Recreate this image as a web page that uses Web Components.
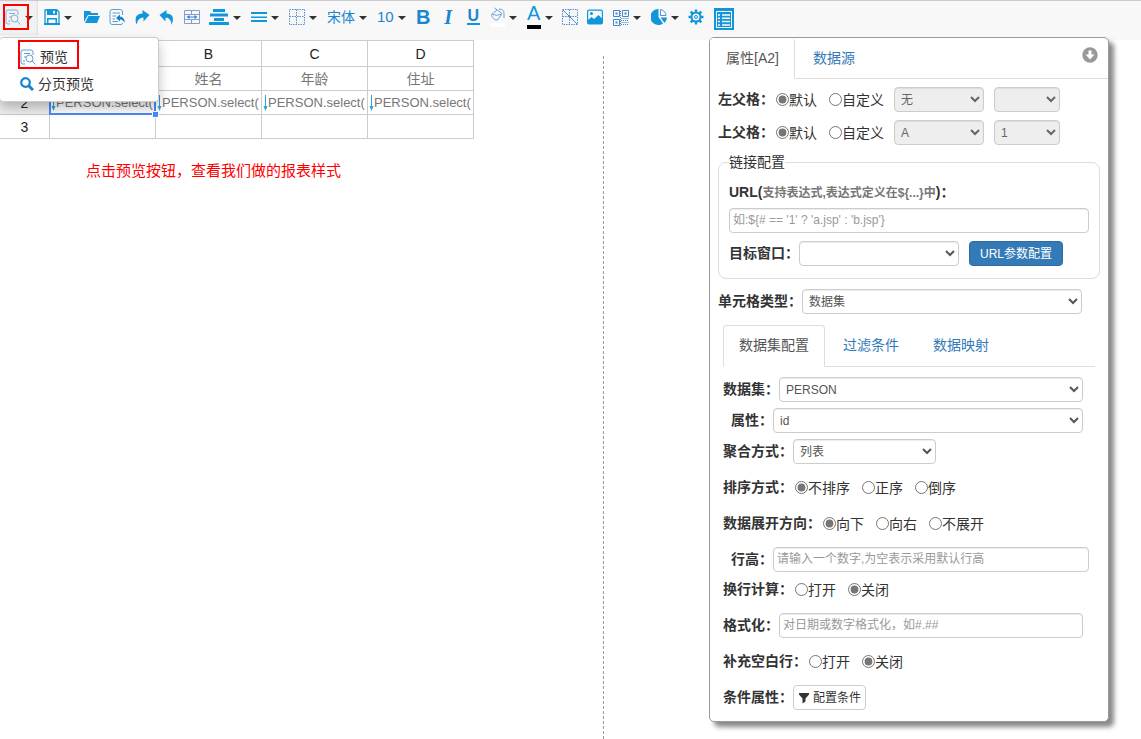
<!DOCTYPE html>
<html lang="zh-CN">
<head>
<meta charset="utf-8">
<title>报表设计器</title>
<style>
  body { margin: 0; background: #fff; color: #333; font: 14px/20px "Liberation Sans", "Noto Sans CJK SC", sans-serif; }
</style>
</head>
<body>
<report-designer></report-designer>

<template id="t-designer">
  <style>
    :host { display: flex; flex-direction: column; min-height: 100vh; position: relative; overflow: hidden; }
    main { display: flex; flex: 1; }
    sheet-grid { flex: none; width: 603px; }
    .guide { margin-top: 16px; border-left: 1px dashed #999; }
    preview-menu { position: absolute; left: 0; top: 37px; z-index: 2; }
    property-panel { position: absolute; right: 32px; top: 37px; z-index: 1; }
  </style>
  <tool-bar></tool-bar>
  <main>
    <sheet-grid></sheet-grid>
    <div class="guide"></div>
  </main>
  <preview-menu></preview-menu>
  <property-panel></property-panel>
</template>

<template id="t-toolbar">
  <style>
    :host { display: flex; align-items: flex-start; height: 39px; background: #f8f8f8; border-top: 1px solid #ccc; }
    .first { margin-right: 1px; }
    .save { margin-right: 2px; }
    .last { margin-left: 3px; }
    .txt { font-size: 15px; }
    .cjk { font-size: 14px; }
    .b, .i, .u, .a { font-size: 20px; width: 15px; text-align: center; }
    .b, .i { font-weight: bold; }
    .i { font-family: "Liberation Serif", serif; font-style: italic; }
    .u { font-size: 16px; line-height: 14px; border-bottom: 2px solid #1296db; width: 13px; font-weight: bold; }
    .a { width: 14px; line-height: 14px; padding-bottom: 5px; border-bottom: 4px solid #000; color: #1296db; }
  </style>
  <tool-button class="first" label="预览" menu active marked><svg width="16" height="16" viewBox="0 0 16 16" fill="none" stroke="#7fb0dc"><path d="M5 15H3Q1 15 1 13V3Q1 1 3 1H11Q13 1 13 3V6M4 4.500H10M4 8H6M3 12H5"/><circle cx="9.500" cy="9.500" r="3.500"/><path d="M12 12L15.500 15.500"/></svg></tool-button>
  <tool-button class="save" label="保存" menu><svg width="16" height="16" viewBox="0 0 16 16"><path fill="none" stroke="#1296db" stroke-width="1.300" d="M1 1H13L15 3V15H1Z"/><path fill="#1296db" fill-rule="evenodd" d="M3 0H13V6H3ZM9 1.500V4.500H11V1.500ZM3 9H13V15H3ZM4.500 10.500V14H11.500V10.500Z"/><path fill="#1296db" d="M0 14H16V16H0Z"/></svg></tool-button>
  <tool-button label="打开"><svg width="16" height="16" viewBox="0 0 16 16" fill="#1296db"><path d="M0 2H6L7.500 4H14V6H4L0 13Z"/><path d="M4.500 7H16L13 14H1Z"/></svg></tool-button>
  <tool-button label="导入"><svg width="16" height="16" viewBox="0 0 16 16" fill="none" stroke="#5f9fd6"><path d="M13.500 6V3Q13.500.5 11.500.5H3Q1 .5 1 3V13Q1 15.500 3 15.500H12Q13.500 15.500 13.500 14M3.500 4H11M3.500 7H7M3.500 10H6M3.500 12.500H9"/><path fill="#1583cc" stroke="none" d="M7 9L11 5.500V7.500Q15.500 8 16 14Q14 10.500 11 10.500V12.500Z"/></svg></tool-button>
  <tool-button label="重做"><svg width="16" height="16" viewBox="0 0 16 16" fill="#1296db"><path d="M8.500 1L15.500 6L9.500 12.500L9.500 8.500Q4 8.500 2.500 15.500Q-1 5 8.500 4.500Z"/></svg></tool-button>
  <tool-button label="撤销"><svg width="16" height="16" viewBox="0 0 16 16" fill="#1296db"><path d="M7.500 1L.5 6L6.500 12.500L6.500 8.500Q12 8.500 12.500 16Q17 5 7.500 4.500Z"/></svg></tool-button>
  <tool-button label="合并单元格"><svg width="16" height="16" viewBox="0 0 16 16" fill="none" stroke="#7f9fd3"><path d="M.5 1.500H15.500V14.500H.5ZM.5 5.500H15.500M.5 10.500H15.500M7.500 1V5.500M7.500 10.500V15"/><path stroke="#2f86cc" d="M4 8H12"/><path fill="#2f86cc" stroke="none" d="M5.500 6L2.500 8L5.500 10ZM10.500 6L13.500 8L10.500 10Z"/></svg></tool-button>
  <tool-button label="水平对齐" menu><svg width="20" height="16" viewBox="0 0 20 16" fill="#1296db"><path d="M4 0H16V3H4ZM1 4.500H19V7.500H1ZM5 9H15V12H5ZM0 13H20V16H0Z"/></svg></tool-button>
  <tool-button label="垂直对齐" menu><svg width="16" height="16" viewBox="0 0 16 16" fill="#1296db"><path d="M0 3H16V5H0ZM0 7.500H16V9H0ZM0 11H16V13H0Z"/></svg></tool-button>
  <tool-button label="边框" menu><svg width="16" height="16" viewBox="0 0 16 16" fill="none" stroke="#558fcf" stroke-dasharray="1.500 1"><path d="M.5.5H15.500V15.500H.5ZM.5 7.500H15.500M7.500.5V15.500"/></svg></tool-button>
  <tool-button label="字体" menu><span class="cjk">宋体</span></tool-button>
  <tool-button label="字号" menu><span class="txt">10</span></tool-button>
  <tool-button label="加粗"><span class="b">B</span></tool-button>
  <tool-button label="斜体"><span class="i">I</span></tool-button>
  <tool-button label="下划线"><span class="u">U</span></tool-button>
  <tool-button label="背景色" menu><svg width="14" height="20" viewBox="0 0 14 20" fill="none" stroke="#6aa3d8"><path d="M3.500 1L11 6.500L7 12.500Q5 13.500 3.500 12.500L1 9.500Q0 8 1 7L6 3M1.500 7.500Q6 9 10 7.500M8 2Q13 2 13 6.500V11"/><path fill="#fff" stroke="none" d="M0 16H14V20H0Z"/></svg></tool-button>
  <tool-button label="字体颜色" menu><span class="a">A</span></tool-button>
  <tool-button label="斜表头"><svg width="16" height="16" viewBox="0 0 16 16" fill="none" stroke="#4f91cf"><path stroke-dasharray="1.500 1" d="M.5.5H15.500V15.500H.5ZM.5 7.500H15.500M7.500.5V15.500"/><path d="M1 1L15 15"/></svg></tool-button>
  <tool-button label="图片"><svg width="16" height="16" viewBox="0 0 16 16"><rect x=".6" y="1.100" width="14.800" height="13.800" rx="1.500" fill="none" stroke="#1296db" stroke-width="1.200"/><circle cx="4.500" cy="4.500" r="1.500" fill="#1296db"/><path fill="#1296db" d="M1 11L4.500 8L7 10L11.500 6L15 9.500V15H1Z"/></svg></tool-button>
  <tool-button label="条码" menu><svg width="16" height="18" viewBox="0 0 16 18" fill="none" stroke="#4287c8"><path d="M.5 2.500H6.500V8.500H.5ZM9.500 2.500H15.500V8.500H9.500ZM.5 11.500H6.500V17.500H.5Z"/><path fill="#4287c8" stroke="none" d="M2.500 4.500H4.500V6.500H2.500ZM11.500 4.500H13.500V6.500H11.500ZM2.500 13.500H4.500V15.500H2.500Z"/><path stroke-dasharray="1 1" d="M8.500 10.500H16M8 12.500H16M8.500 14.500H16M8 16.500H16M7.500 3V18"/></svg></tool-button>
  <tool-button label="图表" menu><svg width="16" height="16" viewBox="0 0 16 16"><path fill="#1296db" d="M7.500 0V8L12 14.500A8 8 0 1 1 7.500 0Z"/><path fill="none" stroke="#4f97d2" d="M9.500.5V6.500H15Q14.500 1.500 9.500.5Z"/><path fill="#1296db" d="M9.500 8.500H16Q16 11.500 13.500 14Z"/></svg></tool-button>
  <tool-button label="设置"><svg width="16" height="16" viewBox="0 0 16 16" fill="none" stroke="#1296db"><path stroke-width="2.500" d="M8 .5V4M8 12V15.500M.5 8H4M12 8H15.500M2.700 2.700L5 5M11 11L13.300 13.300M2.700 13.300L5 11M11 5L13.300 2.700"/><circle cx="8" cy="8" r="4.500" stroke-width="2" fill="#f8f8f8"/><circle cx="8" cy="8" r="1.500"/></svg></tool-button>
  <tool-button class="last" label="属性面板" tall><svg width="20" height="22" viewBox="0 0 20 22"><path fill="#1296db" d="M0 0H20V22H0Z"/><path fill="none" stroke="#fff" d="M2.500 3.500H17.500V19.500H2.500Z"/><path stroke="#fff" stroke-width="1.500" d="M4 7H6M8 7H16M4 10.300H6M8 10.300H16M4 13.600H6M8 13.600H16M4 17H6M8 17H16"/></svg></tool-button>
</template>

<template id="t-toolbutton">
  <style>
    :host { display: block; }
    button { position: relative; display: flex; align-items: center; justify-content: center; gap: 4px; min-width: 25px; height: 32px; margin: 0; padding: 0; border: 0; background: none; color: #1a86cf; font: inherit; }
    :host([menu]) button { padding: 0 5px; }
    :host([active]) button { height: 34px; padding-bottom: 2px; background: #f2f2f2; box-shadow: inset -1px 0 2px #ddd; }
    :host([tall]) button { height: 36px; }
    .caret { display: none; border: 4px solid transparent; border-top-color: #333; border-bottom: 0; margin-top: 2px; }
    :host([menu]) .caret { display: block; }
    .mark { display: none; position: absolute; left: 3px; top: 3px; width: 22px; height: 22px; border: 2px solid #f00; }
    :host([marked]) .mark { display: block; }
    ::slotted(*) { display: block; }
  </style>
  <button type="button"><slot></slot><span class="caret"></span><span class="mark"></span></button>
</template>

<template id="t-menu">
  <style>
    :host { display: block; width: 159px; background: #fff; border: 1px solid #ccc; border-left: 0; border-radius: 4px; box-shadow: 0 6px 12px rgba(0,0,0,.25); box-sizing: border-box; padding: 5px 0 4px; }
    ul { list-style: none; margin: 0; padding: 0; }
    li { position: relative; height: 27px; padding-left: 20px; }
    a { display: flex; align-items: center; gap: 4px; height: 27px; color: #333; text-decoration: none; }
    .mark { position: absolute; left: 18px; top: -3px; width: 57px; height: 25px; border: 2px solid #f00; }
  </style>
  <ul>
    <li><a href="#preview"><svg width="16" height="16" viewBox="0 0 16 16" fill="none" stroke="#5d9fd3"><path d="M5 15H3Q1 15 1 13V3Q1 1 3 1H11Q13 1 13 3V6M4 4.500H10M4 8H6M3 12H5"/><circle cx="9.500" cy="9.500" r="3.500"/><path d="M12 12L15.500 15.500"/></svg>预览</a><span class="mark"></span></li>
    <li><a href="#paged"><svg width="14" height="14" viewBox="0 0 14 14" fill="none" stroke="#1583cc"><circle cx="5.500" cy="5.500" r="4.300" stroke-width="2.200"/><path stroke-width="3" d="M8.500 8.500L13 13"/></svg>分页预览</a></li>
  </ul>
</template>

<template id="t-sheet">
  <style>
    :host { display: block; }
    table { border-collapse: collapse; table-layout: fixed; width: 475px; margin-left: -1px; }
    col.h { width: 50px; }
    th, td { border: 1px solid #ccc; padding: 0; height: 23px; text-align: center; line-height: 20px; }
    thead th { height: 25px; }
    th { font-weight: normal; color: #222; }
    th.on { background: #eee; }
    td { color: #777; font-size: 13px; position: relative; }
    .cap { font-size: 14px; }
    .sel { position: absolute; inset: -1px; border: 2px solid #4b89ff; }
    .knob { position: absolute; right: -4px; bottom: -4px; width: 5px; height: 5px; background: #4b89ff; border: 1px solid #fff; z-index: 1; }
    p { margin: 22px 0 0 86px; color: #f00; font-size: 15px; }
  </style>
  <table>
    <colgroup><col class="h"><col><col><col><col></colgroup>
    <thead><tr><th></th><th>A</th><th>B</th><th>C</th><th>D</th></tr></thead>
    <tbody>
      <tr><th>1</th><td></td><td class="cap">姓名</td><td class="cap">年龄</td><td class="cap">住址</td></tr>
      <tr><th class="on">2</th><td><cell-expr>PERSON.select(</cell-expr><span class="sel"></span><span class="knob"></span></td><td><cell-expr>PERSON.select(</cell-expr></td><td><cell-expr>PERSON.select(</cell-expr></td><td><cell-expr>PERSON.select(</cell-expr></td></tr>
      <tr><th>3</th><td></td><td></td><td></td><td></td></tr>
    </tbody>
  </table>
  <p>点击预览按钮，查看我们做的报表样式</p>
</template>

<template id="t-expr">
  <style>
    :host { display: flex; align-items: center; height: 23px; overflow: hidden; white-space: nowrap; }
    svg { flex: none; margin-left: 1px; }
  </style>
  <svg width="5" height="16" viewBox="0 0 5 16"><path fill="#2aa3e0" d="M2 0H3V11H4.500L2.500 16L.5 11H2Z"/></svg><slot></slot>
</template>

<template id="t-tabs">
  <style>
    :host { display: block; }
    nav { display: flex; gap: 2px; border-bottom: 1px solid #ddd; }
    a { padding: 9px 15px 11px; border: 1px solid transparent; border-radius: 4px 4px 0 0; margin-bottom: -1px; color: #337ab7; text-decoration: none; }
    a.on { color: #555; background: #fff; border-color: #ddd #ddd #fff; }
    :host([flush]) a { padding-bottom: 10px; }
    :host([flush]) a.on { border-top-color: transparent; border-left-color: transparent; }
  </style>
  <nav></nav>
</template>

<template id="t-row">
  <style>
    :host { display: flex; align-items: center; height: 25px; margin-top: 6px; }
    :host([tight]) { margin-top: 5px; }
    :host([loose]) { margin-top: 11px; }
    :host([indent]) { padding-left: 8px; }
    ::slotted(label), ::slotted(.label) { font-weight: bold; padding-bottom: 2px; }
  </style>
  <slot></slot>
</template>

<template id="t-radios">
  <style>
    :host { display: block; margin-left: 2px; }
    fieldset { display: flex; gap: 12px; border: 0; margin: 0; padding: 0; min-width: 0; }
    label { display: flex; align-items: center; }
    input { width: 13px; height: 13px; margin: 0; accent-color: #767676; }
  </style>
  <fieldset></fieldset>
</template>

<template id="t-panel">
  <style>
    :host { display: block; width: 400px; box-sizing: border-box; background: #fff; border: 1px solid #999; border-radius: 5px; box-shadow: 5px 5px 5px #888; }
    .collapse { position: absolute; right: 10px; top: 9px; padding: 0; border: 0; background: none; line-height: 0; }
    .body { padding: 8px 8px 11px; }
    select, input, .btn { box-sizing: border-box; height: 25px; border: 1px solid #ccc; border-radius: 4px; font: 12px/18px "Liberation Sans", "Noto Sans CJK SC", sans-serif; color: #555; background-color: #fff; margin: 0; }
    select, input { box-shadow: inset 0 1px 1px rgba(0,0,0,.075); padding: 2px; min-width: 0; }
    input { padding: 1px 3px 3px; }
    input::placeholder { color: #999; opacity: 1; }
    select:disabled { background-color: #eee; opacity: 1; color: #666; }
    .top { margin-top: 8px; }
    .top:first-child { margin-top: 0; }
    .w90 { width: 90px; margin-left: 10px; }
    .w66 { width: 66px; margin-left: 10px; }
    .w143 { width: 143px; }
    .w160 { width: 160px; }
    .fill { flex: 1; }
    .link { border: 1px solid #ddd; border-radius: 8px; margin: 7px 0 10px; padding: 10px 10px 12px; min-width: 0; }
    .link legend { padding: 0; height: 20px; }
    .link .url { display: block; font-weight: bold; margin-bottom: 5px; }
    .link small { font-size: 12px; color: #777; }
    .link input { display: block; width: 100%; }
    .link form-row { margin-top: 8px; }
    .btn { color: #333; padding: 0 4px; display: flex; align-items: center; gap: 3px; white-space: nowrap; }
    .primary { color: #fff; background: #337ab7; border-color: #2e6da4; padding: 0 10px; margin-left: 10px; }
    .type { margin: 0 18px 0 0; }
    .data { margin: 11px 5px 0; }
    .data form-row { margin-right: 12px; }
    .data .first { margin-top: 10px; }
    .data .wide { margin-right: 6px; }
  </style>
  <tab-strip flush tabs="属性[A2],数据源"></tab-strip>
  <button class="collapse" type="button" aria-label="收起"><svg width="16" height="16" viewBox="0 0 16 16"><circle cx="8" cy="8" r="7.700" fill="#999"/><path fill="#fff" d="M6.500 3.500H9.500V7.500H12.500L8 12.500L3.500 7.500H6.500Z"/></svg></button>
  <div class="body">
    <form-row class="top"><span class="label">左父格：</span><radio-set name="left" label="左父格" options="默认,自定义" value="默认"></radio-set><select class="w90" aria-label="左父格列" disabled><option>无</option></select><select class="w66" aria-label="左父格行" disabled><option></option></select></form-row>
    <form-row class="top"><span class="label">上父格：</span><radio-set name="top" label="上父格" options="默认,自定义" value="默认"></radio-set><select class="w90" aria-label="上父格列" disabled><option>A</option></select><select class="w66" aria-label="上父格行" disabled><option>1</option></select></form-row>
    <fieldset class="link">
      <legend>链接配置</legend>
      <label class="url" for="url">URL(<small>支持表达式,表达式定义在${...}中</small>)：</label>
      <input id="url" type="text" placeholder="如:${# == '1' ? 'a.jsp' : 'b.jsp'}">
      <form-row><label for="target">目标窗口：</label><select id="target" class="w160"><option></option></select><button class="btn primary" type="button">URL参数配置</button></form-row>
    </fieldset>
    <form-row class="type"><label for="type">单元格类型：</label><select id="type" class="fill"><option>数据集</option></select></form-row>
    <div class="data">
      <tab-strip tabs="数据集配置,过滤条件,数据映射"></tab-strip>
      <form-row class="first"><label for="ds">数据集：</label><select id="ds" class="fill"><option>PERSON</option></select></form-row>
      <form-row indent><label for="prop">属性：</label><select id="prop" class="fill"><option>id</option></select></form-row>
      <form-row><label for="agg">聚合方式：</label><select id="agg" class="w143"><option>列表</option></select></form-row>
      <form-row loose><span class="label">排序方式：</span><radio-set name="sort" label="排序方式" options="不排序,正序,倒序" value="不排序"></radio-set></form-row>
      <form-row loose><span class="label">数据展开方向：</span><radio-set name="expand" label="数据展开方向" options="向下,向右,不展开" value="向下"></radio-set></form-row>
      <form-row loose indent class="wide"><label for="height">行高：</label><input id="height" class="fill" type="text" placeholder="请输入一个数字,为空表示采用默认行高"></form-row>
      <form-row tight><span class="label">换行计算：</span><radio-set name="wrap" label="换行计算" options="打开,关闭" value="关闭"></radio-set></form-row>
      <form-row loose><label for="format">格式化：</label><input id="format" class="fill" type="text" placeholder="对日期或数字格式化，如#.##"></form-row>
      <form-row loose><span class="label">补充空白行：</span><radio-set name="blank" label="补充空白行" options="打开,关闭" value="关闭"></radio-set></form-row>
      <form-row loose><label for="cond">条件属性：</label><button id="cond" class="btn" type="button"><svg width="12" height="12" viewBox="0 0 12 12"><path fill="#333" d="M1 1H11V2.500L7.500 6.500V9.500L4.500 11.500V6.500L1 2.500Z"/></svg>配置条件</button></form-row>
    </div>
  </div>
</template>

<script>
  class TemplateElement extends HTMLElement {
    connectedCallback() {
      if (this.shadowRoot) return;
      const source = document.getElementById(this.constructor.template);
      this.attachShadow({ mode: 'open' }).append(source.content.cloneNode(true));
      this.ready();
    }
    ready() {}
  }
  const define = (name, template, ready) => {
    customElements.define(name, class extends TemplateElement {
      static template = template;
      ready() { if (ready) ready(this, this.shadowRoot); }
    });
  };

  define('tool-button', 't-toolbutton', (host, root) => {
    root.querySelector('button').setAttribute('aria-label', host.getAttribute('label'));
  });
  define('cell-expr', 't-expr');
  define('form-row', 't-row');
  define('tab-strip', 't-tabs', (host, root) => {
    const nav = root.querySelector('nav');
    host.getAttribute('tabs').split(',').forEach((text, index) => {
      const link = document.createElement('a');
      link.href = '#tab' + index;
      link.textContent = text;
      if (index === 0) link.className = 'on';
      nav.append(link);
    });
  });
  define('radio-set', 't-radios', (host, root) => {
    const group = root.querySelector('fieldset');
    group.setAttribute('aria-label', host.getAttribute('label'));
    for (const text of host.getAttribute('options').split(',')) {
      const label = document.createElement('label');
      const input = document.createElement('input');
      const caption = document.createElement('span');
      input.type = 'radio';
      input.name = host.getAttribute('name');
      input.checked = text === host.getAttribute('value');
      caption.textContent = text;
      label.append(input, caption);
      group.append(label);
    }
  });
  define('tool-bar', 't-toolbar');
  define('preview-menu', 't-menu');
  define('sheet-grid', 't-sheet');
  define('property-panel', 't-panel');
  define('report-designer', 't-designer');
</script>
</body>
</html>
